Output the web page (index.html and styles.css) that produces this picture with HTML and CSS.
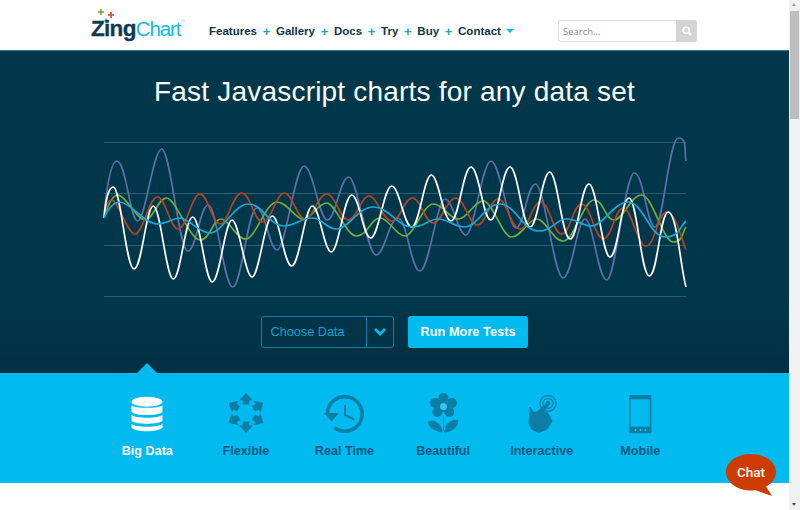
FILE: index.html
```html
<!DOCTYPE html>
<html lang="en">
<head>
<meta charset="utf-8">
<title>ZingChart</title>
<link rel="stylesheet" href="styles.css">
</head>
<body>
<div class="window">
  <div class="page">
    <header class="topbar">
      <a class="logo" href="#">
        <svg class="logo-stars" width="30" height="24" viewBox="0 0 30 24"><path class="star-green" d="M9.200 2H10.800V4.200H13V5.800H10.800V8H9.200V5.800H7V4.200H9.200z"/><path class="star-red" d="M19.200 5H20.800V7.200H23V8.800H20.800V11H19.200V8.800H17V7.200H19.200z"/><path class="star-blue" d="M14.400 11.500H15.600V13.400H17.500V14.600H15.600V16.500H14.400V14.600H12.500V13.400H14.400z"/></svg>
        <span class="logo-text"><b>Zing</b><span class="logo-chart">Chart</span><sup>™</sup></span>
      </a>
      <nav class="nav">
        <a href="#">Features</a><span class="plus">+</span>
        <a href="#">Gallery</a><span class="plus">+</span>
        <a href="#">Docs</a><span class="plus">+</span>
        <a href="#">Try</a><span class="plus">+</span>
        <a href="#">Buy</a><span class="plus">+</span>
        <a href="#">Contact</a><span class="caret"></span>
      </nav>
      <form class="search">
        <input class="search-input" type="text" placeholder="Search...">
        <span class="search-btn">
          <svg width="10" height="10" viewBox="0 0 10 10"><circle cx="4.200" cy="4.200" r="3" fill="none" stroke="#fff" stroke-width="1.600"/><path d="M6.500 6.500 9.300 9.300" stroke="#fff" stroke-width="1.800"/></svg>
        </span>
      </form>
    </header>

    <section class="hero">
      <h1>Fast Javascript charts for any data set</h1>
      <svg class="chart" width="789" height="170" viewBox="0 130 789 170">
        <g class="grid">
          <path d="M104 142.500H686M104 193.500H686M104 245.500H686M104 296.500H686"/>
        </g>
        <g class="lines">
          <path class="l-purple" d="M104 218S108 161 117 161S130 221 137.700 221S153 149 161.700 149S179 251 187.700 251S200 205 208.300 205S224 287 232.700 287S248 208 256.700 208S269 250 277.300 250S295 166 304 166S319 220 327.300 220S340 177 348.700 177S367 255 376 255S389 218 398 218S411 271 420 271S437 199 445 199S458 235 466 235S482 161 491 161S508 228 516 228S527 184 535.700 184S554 278 563 278S577 219 585 219S598 280 606.700 280S625 173 634.300 173S647 227 655 227S669 138 678.300 138S684 150 686 161"/>
          <path class="l-green" d="M104 218S110 195 117.700 195S137 220 145 220S158 198 166.700 198S190 240 200 240S213 219 221 219S236 239 245.700 239S266 202 276.700 202S295 219 303.300 219S318 203 326.700 203S346 236 356.700 236S371 218 380 218S396 236 405 236S423 204 433.300 204S449 219 458.300 219S474 201 483.300 201S502 237 511.700 237S528 219 536.700 219S553 241 563.300 241S584 200 594 200S605 220 614 220S631 195 641.700 195S663 242 673.300 242S682 232 686 227"/>
          <path class="l-red" d="M104 218S105 200 111.700 200S127 234 135 234S149 197 157.300 197S170 229 178.300 229S192 194 200 194S212 224 220 224S233 193 241.700 193S254 222 262.700 222S276 193 284.300 193S297 219 305 219S318 194 326.700 194S340 220 348.300 220S361 196 369 196S383 221 391.700 221S404 198 412.300 198S425 223 433.300 223S447 198 455.700 198S469 225 477.300 225S490 199 498.300 199S511 229 520 229S532 202 540.700 202S553 234 561.700 234S573 204 581.700 204S595 239 603.300 239S615 208 623.300 208S637 246 646 246S658 212 666.700 212S682 240 686 250"/>
          <path class="l-white" d="M104 218S106 187 113.300 187S126 269 134 269S146 206 153.300 206S166 279 173.300 279S185 217 192.700 217S205 282 212.300 282S225 220 232 220S245 277 252 277S265 216 272.300 216S284 266 291.700 266S305 206 312.300 206S324 252 331.300 252S344 195 351.700 195S363 238 370.700 238S384 186 391.700 186S404 227 411.700 227S424 175 431.300 175S443 221 451 221S463 167 471 167S483 220 490.700 220S502 167 510 167S522 227 530 227S542 172 549.700 172S562 239 570 239S581 184 589 184S602 257 610 257S621 198 629 198S641 276 649.300 276S660 212 668.300 212S681 270 686 287"/>
          <path class="l-blue" d="M104 218S110 202 120 202S145 224 156.700 224S171 218 180 218S198 233 210 233S234 204 248.300 204S270 226 283.300 226S300 218 311.700 218S325 229 336.700 229S358 207 373.300 207S398 227 411.700 227S428 219 438.300 219S453 227 465 227S485 204 500 204S523 231 538.300 231S555 219 566.700 219S581 226 591.700 226S614 202 628.300 202S650 237 665 237S680 226 686 221"/>
        </g>
      </svg>
      <div class="controls">
        <div class="select">
          <span class="select-label">Choose Data</span>
          <span class="select-arrow"><svg width="14" height="10" viewBox="0 0 14 10"><path d="M2 2 7 7 12 2" fill="none" stroke="#00baf0" stroke-width="2.800"/></svg></span>
        </div>
        <a class="run-btn" href="#">Run More Tests</a>
      </div>
    </section>

    <section class="features">
      <div class="feature active">
        <svg class="f-icon" width="42" height="42" viewBox="0 0 42 42" fill="#fff"><g transform="translate(1 1.700)"><ellipse cx="20" cy="7" rx="15.500" ry="5"/><path d="M4.500 10.500C7 14 33 14 35.500 10.500V17C33 21.500 7 21.500 4.500 17z"/><path d="M4.500 20C7 24 33 24 35.500 20V26C33 30 7 30 4.500 26z"/><path d="M4.500 29C7 33 33 33 35.500 29V32.500C33 38 7 38 4.500 32.500z"/></g></svg>
        <span>Big Data</span>
      </div>
      <div class="feature">
        <svg class="f-icon" width="42" height="42" viewBox="0 0 42 42" fill="#0c7da3"><path d="M21 0 28 7.500H24.200V11.500H17.800V7.500H14z"/><path d="M21 0 28 7.500H24.200V11.500H17.800V7.500H14z" transform="rotate(60 21 20)"/><path d="M21 0 28 7.500H24.200V11.500H17.800V7.500H14z" transform="rotate(120 21 20)"/><path d="M21 0 28 7.500H24.200V11.500H17.800V7.500H14z" transform="rotate(180 21 20)"/><path d="M21 0 28 7.500H24.200V11.500H17.800V7.500H14z" transform="rotate(240 21 20)"/><path d="M21 0 28 7.500H24.200V11.500H17.800V7.500H14z" transform="rotate(300 21 20)"/></svg>
        <span>Flexible</span>
      </div>
      <div class="feature">
        <svg class="f-icon" width="42" height="42" viewBox="0 0 42 42"><path d="M4.500 20.500A17.300 17.300 0 1 1 11.300 34.700" fill="none" stroke="#0c7da3" stroke-width="3.500"/><path d="M1 20H16L8.500 28.500z" fill="#0c7da3"/><path d="M22 12V22L31 26.500" fill="none" stroke="#0c7da3" stroke-width="2"/></svg>
        <span>Real Time</span>
      </div>
      <div class="feature">
        <svg class="f-icon" width="42" height="42" viewBox="0 0 42 42" fill="#0c7da3"><circle cx="21.300" cy="5" r="5"/><circle cx="13" cy="10" r="5"/><circle cx="30" cy="10" r="5"/><circle cx="15.300" cy="19" r="5"/><circle cx="27.300" cy="19" r="5"/><circle cx="21.500" cy="13.500" r="5.500"/><circle cx="21.500" cy="13.500" r="3.500" fill="#35c6ee"/><path d="M21 23H22V38H21z"/><path d="M20.500 39.500C12 38.500 6 33.500 6 28.500C13 26 20 31 20.500 39.500z"/><path d="M22.500 39.500C31 38.500 37 33 36 27C29 26 22 31 22.500 39.500z"/></svg>
        <span>Beautiful</span>
      </div>
      <div class="feature">
        <svg class="f-icon" width="42" height="42" viewBox="0 0 42 42" fill="#0c7da3"><circle cx="27" cy="10.300" r="8" fill="none" stroke="#0c7da3" stroke-width="1.300"/><circle cx="27" cy="10.300" r="5" fill="none" stroke="#0c7da3" stroke-width="1.200"/><circle cx="27" cy="10.300" r="2.200"/><path d="M9 14 12.500 19.500 16 19 25 11 27 13 22 19.500 26.500 20 31 28 26 36 17.500 39.500 10.500 36 8 30z" stroke="#0c7da3" stroke-linejoin="round"/></svg>
        <span>Interactive</span>
      </div>
      <div class="feature">
        <svg class="f-icon" width="42" height="42" viewBox="0 0 42 42"><rect x="10" y="2" width="22.400" height="38.300" rx="1.500" fill="#0c7da3"/><rect x="11.700" y="6.300" width="19" height="27.400" fill="#00baf0"/><circle cx="16.400" cy="37" r="1" fill="#3ec3ea"/><circle cx="21.400" cy="37" r="1" fill="#3ec3ea"/><circle cx="26.400" cy="37" r="1" fill="#3ec3ea"/></svg>
        <span>Mobile</span>
      </div>
    </section>
    <div class="rest"></div>
  </div>
  <div class="scrollbar">
    <span class="sb-up"></span>
    <span class="sb-thumb"></span>
    <span class="sb-space"></span>
    <span class="sb-down"></span>
  </div>
</div>
<a class="chat" href="#">
  <svg class="chat-bubble" width="52" height="52" viewBox="0 0 52 52"><path d="M26 1C40 1 51 9 51 19C51 26 46 31 41 33.500L47 43 30 37C28 37.500 27 37.500 26 37.500C12 37.500 1 29 1 19C1 9 12 1 26 1z" fill="#cc3c00"/></svg>
  <span class="chat-label">Chat</span>
</a>
</body>
</html>
```

FILE: styles.css
```css
* { box-sizing: border-box; }
html, body { margin: 0; height: 100%; overflow: hidden; background: #fff; }
body { font-family: "Liberation Sans", Arial, sans-serif; }
a { text-decoration: none; color: inherit; }

.window { display: flex; width: 800px; height: 510px; }
.page { flex: 1; min-width: 0; display: flex; flex-direction: column; }

.topbar { height: 51px; display: flex; align-items: flex-start; border-bottom: 1px solid #3d7686; background: #fff; padding-left: 91px; }
.logo { position: relative; display: block; width: 118px; height: 50px; color: #12bbe3; }
.logo-stars { position: absolute; left: 0; top: 7px; }
.logo-stars .star-green { fill: #6fa83a; }
.logo-stars .star-red { fill: #d8492a; }
.logo-stars .star-blue { fill: #12bbe3; }
.logo-text { position: absolute; left: 0; top: 16px; font-size: 22.500px; letter-spacing: -0.700px; line-height: 26px; white-space: nowrap; }
.logo-text b { color: #0f3a4f; -webkit-text-stroke: 0.300px #0f3a4f; }
.logo-chart { font-size: 20.500px; letter-spacing: -1.100px; }
.logo-text sup { font-size: 5px; color: #8cc; vertical-align: 13px; line-height: 0; letter-spacing: 0; }

.nav { display: flex; align-items: center; width: 349px; height: 16px; margin-top: 23px; font-size: 11.500px; font-weight: 700; color: #0f3547; }
.plus { width: 19px; text-align: center; font-size: 13px; color: #12a5cc; font-weight: 700; }
.caret { margin-left: 5px; border: 4px solid transparent; border-top: 4px solid #12bbe3; border-bottom: 0; }

.search { display: flex; height: 22px; width: 139px; margin: 20px 0 0 0; border-radius: 3px; }
.search-input { width: 118px; height: 22px; border: 1px solid #dedede; border-right: 0; border-radius: 3px 0 0 3px; padding: 0 4px; font: 9.500px "Open Sans", sans-serif; outline: 0; background: #fff; }
.search-input::placeholder { color: #8a8a8a; opacity: 1; }
.search-btn { width: 21px; height: 22px; background: #d4d4d4; border-radius: 0 3px 3px 0; display: flex; align-items: center; justify-content: center; }

.hero { height: 322px; background: linear-gradient(#00374b 0, #00374b 78%, #032f41 100%); display: flex; flex-direction: column; align-items: center; }
.hero h1 { margin: 0; padding-top: 24px; height: 79px; font-size: 28px; line-height: 34px; font-weight: 400; color: #fff; text-align: center; letter-spacing: 0.200px; }
.chart { display: block; flex: none; }
.grid path { fill: none; stroke: #2b5f70; stroke-width: 1; }
.lines path { fill: none; stroke-width: 1.700; }
.l-purple { stroke: #5d6ea3; }
.l-green { stroke: #71ad3b; }
.l-red { stroke: #b5431f; }
.l-white { stroke: #fff; stroke-width: 1.600; }
.l-blue { stroke: #17a8d4; stroke-width: 2; }

.controls { display: flex; gap: 14px; margin-top: 16px; }
.select { width: 133px; height: 32px; display: flex; border: 1px solid #157ca3; border-radius: 3px; color: #12a0d0; font-size: 12.700px; }
.select-label { flex: 1; padding-left: 8.500px; line-height: 30px; }
.select-arrow { width: 27px; border-left: 1px solid #157ca3; display: flex; align-items: center; justify-content: center; }
.run-btn { width: 120px; height: 32px; background: #00baf0; border-radius: 3px; color: #fff; font-size: 12.800px; font-weight: 700; line-height: 31px; text-align: center; }

.features { position: relative; height: 110px; background: #00baf0; padding-left: 98px; display: flex; }
.features::before { content: ""; position: absolute; left: 137px; top: -10px; border: 10px solid transparent; border-top: 0; border-bottom-color: #00baf0; }
.feature { width: 98.600px; display: flex; flex-direction: column; align-items: center; color: #0c587d; font-size: 12.600px; font-weight: 700; padding-top: 20px; }
.feature.active { color: #fff; }
.f-icon { display: block; flex: none; }
.feature span { margin-top: 8px; line-height: 16px; white-space: nowrap; }

.rest { flex: 1; background: #fff; }

.scrollbar { width: 11px; background: #f1f1f1; display: flex; flex-direction: column; align-items: center; }
.sb-up { height: 11px; width: 100%; position: relative; }
.sb-up::after { content: ""; position: absolute; left: 3px; top: 3px; border: 2.500px solid transparent; border-top: 0; border-bottom: 3px solid #a3a3a3; }
.sb-thumb { width: 9px; height: 108px; background: #bdbdbd; }
.sb-space { flex: 1; }
.sb-down { height: 10px; width: 100%; position: relative; }
.sb-down::after { content: ""; position: absolute; left: 3px; top: 3px; border: 2.500px solid transparent; border-bottom: 0; border-top: 3px solid #505050; }

.chat { position: absolute; left: 725px; top: 453px; width: 52px; height: 46px; }
.chat-bubble { display: block; }
.chat-label { position: absolute; left: 0; top: 11px; width: 52px; text-align: center; color: #fff; font: 500 13.500px/16px Roboto, sans-serif; }
```
